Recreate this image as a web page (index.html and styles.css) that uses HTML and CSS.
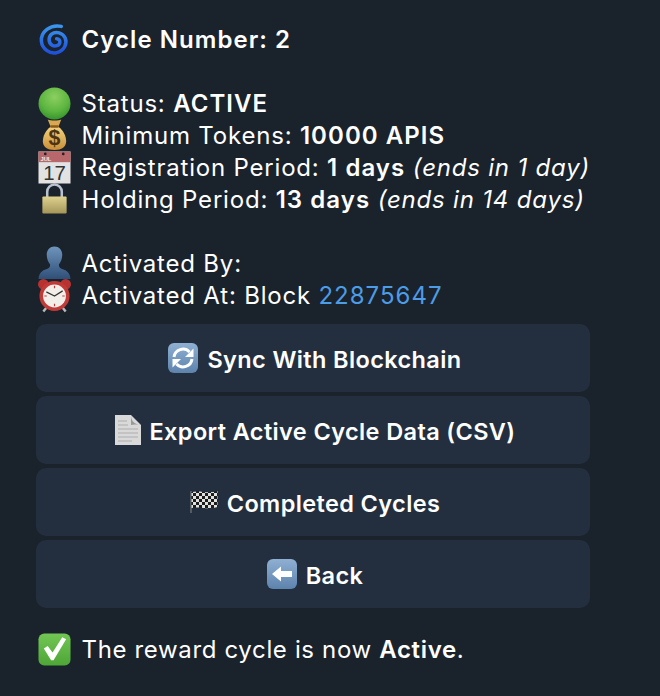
FILE: index.html
```html
<!DOCTYPE html>
<html lang="en">
<head>
<meta charset="utf-8">
<title>Cycle</title>
<link rel="stylesheet" href="styles.css">
</head>
<body>
<svg class="defs" width="0" height="0" aria-hidden="true">
  <defs>
    <linearGradient id="gBlue" x1="0" y1="0" x2="0" y2="1"><stop offset="0" stop-color="#3a96ee"/><stop offset="1" stop-color="#1f50dc"/></linearGradient>
    <radialGradient id="gBall" cx=".5" cy=".3" r=".75"><stop offset="0" stop-color="#8ccf62"/><stop offset=".6" stop-color="#5cb53f"/><stop offset="1" stop-color="#2f8f2a"/></radialGradient>
    <linearGradient id="gBag" x1="0" y1="0" x2="0" y2="1"><stop offset="0" stop-color="#f3d27f"/><stop offset="1" stop-color="#c98f36"/></linearGradient>
    <linearGradient id="gLock" x1="0" y1="0" x2="0" y2="1"><stop offset="0" stop-color="#dfd28f"/><stop offset="1" stop-color="#a39558"/></linearGradient>
    <linearGradient id="gUser" x1="0" y1="0" x2="0" y2="1"><stop offset="0" stop-color="#6f95bd"/><stop offset="1" stop-color="#2f4f77"/></linearGradient>
    <linearGradient id="gKey" x1="0" y1="0" x2="0" y2="1"><stop offset="0" stop-color="#8fb0d2"/><stop offset="1" stop-color="#5d83ad"/></linearGradient>
    <linearGradient id="gCheck" x1="0" y1="0" x2="0" y2="1"><stop offset="0" stop-color="#72c653"/><stop offset="1" stop-color="#4ea638"/></linearGradient>
    <pattern id="pCheck" width="6" height="6" patternUnits="userSpaceOnUse"><rect width="6" height="6" fill="#e0e0e0"/><rect width="3" height="3" fill="#1c1c1c"/><rect x="3" y="3" width="3" height="3" fill="#1c1c1c"/></pattern>
  </defs>
</svg>
<main class="panel">
  <section class="lines">
    <p class="row strong"><svg class="ico" viewBox="0 0 34 34"><path d="M24 3.500C13 1 2.500 9 3.500 19c.8 8 9 13.500 16 11.500 7.500-2 11-9 8.500-15-2.500-5.500-9.500-7.500-14-4-3.500 3-3.500 9 .5 11.500 3 1.800 7.500.3 8-3 .3-2.300-1.300-3.800-3.300-3.800" fill="none" stroke="url(#gBlue)" stroke-width="3.600" stroke-linecap="round"/></svg><span>Cycle Number: 2</span></p>
    <p class="row blank"></p>
    <p class="row"><svg class="ico" viewBox="0 0 34 34"><circle cx="17" cy="17" r="16.500" fill="url(#gBall)"/></svg><span>Status: <b>ACTIVE</b></span></p>
    <p class="row"><svg class="ico" viewBox="0 0 34 34"><path d="M10 .5c3 1.500 11 1.500 14 0l-3 7.500h-8z" fill="#d9a94f"/><path d="M13 8C7.500 12 5 18 5 23c0 6 4.500 9 12 9s12-3 12-9c0-5-2.500-11-8-15z" fill="url(#gBag)"/><rect x="12.500" y="6.500" width="9" height="2.500" rx="1" fill="#8a5a1c"/><text class="dollar" x="17" y="27" text-anchor="middle">$</text></svg><span>Minimum Tokens: <b>10000 APIS</b></span></p>
    <p class="row"><svg class="ico" viewBox="0 0 34 34"><rect x=".5" y=".5" width="33" height="33" fill="#e2e2e2"/><rect x=".5" y=".5" width="33" height="11" fill="#b8676a"/><circle cx="7.500" cy="3" r="1.400" fill="#222"/><circle cx="26" cy="3" r="1.400" fill="#222"/><text class="jul" x="2.500" y="10">JUL</text><text class="day" x="17" y="30" text-anchor="middle">17</text></svg><span>Registration Period: <b>1 days</b> <i>(ends in 1 day)</i></span></p>
    <p class="row"><svg class="ico" viewBox="0 0 34 34"><path d="M9.500 16V9a7.500 7.500 0 0 1 15 0v7" fill="none" stroke="#b9c2cf" stroke-width="2.600"/><rect x="4.500" y="14" width="25" height="17.500" rx="1" fill="url(#gLock)"/></svg><span>Holding Period: <b>13 days</b> <i>(ends in 14 days)</i></span></p>
    <p class="row blank"></p>
    <p class="row"><svg class="ico" viewBox="0 0 34 34"><path d="M17-.5c4.500 0 8 3.500 8 8.500 0 4-1.500 7.500-3.500 10 0 2.500 1 4 4 5 4 1.200 7.500 3.500 8 10H.5c.5-6.500 4-8.800 8-10 3-1 4-2.500 4-5-2-2.500-3.500-6-3.500-10C9 3 12.500-.5 17-.5z" fill="url(#gUser)"/></svg><span>Activated By:</span></p>
    <p class="row"><svg class="ico" viewBox="0 0 34 34"><circle cx="5.500" cy="5.500" r="5.500" fill="#b8322f"/><circle cx="28.500" cy="5.500" r="5.500" fill="#b8322f"/><path d="M9 29l-3.500 4.500M25 29l3.500 4.500" stroke="#b9b9b9" stroke-width="2.500"/><circle cx="17" cy="17.500" r="15.500" fill="#c23a37"/><circle cx="17" cy="17.500" r="11.800" fill="#f2eeea"/><path d="M17 17.500l-8-4M17 17.500l8-5" stroke="#333" stroke-width="1.300" stroke-linecap="round"/><path d="M17 7v2.500M17 25.500v2.500M6.500 17.500h2.500M25 17.500h2.500" stroke="#c23a37" stroke-width="1.200"/></svg><span>Activated At: Block <a class="link" href="#">22875647</a></span></p>
  </section>
  <nav class="buttons">
    <a class="btn" href="#"><svg class="btn-ico" viewBox="0 0 30 30"><rect width="30" height="30" rx="6" fill="url(#gKey)"/><path d="M6 14a9 9 0 0 1 15.500-5M24 16a9 9 0 0 1-15.500 5" fill="none" stroke="#fff" stroke-width="3"/><path d="M25.500 5.500v8.500h-8.500zM4.500 24.500v-8.500h8.500z" fill="#fff"/></svg><span>Sync With Blockchain</span></a>
    <a class="btn" href="#"><svg class="btn-ico doc" viewBox="0 0 26 30"><path d="M0 0h16l10 10v20H0z" fill="#d9d9d9"/><path d="M16 0c0 5 2 9 10 10-4-1-10 0-10 0z" fill="#999"/><path d="M3 6h9M3 10h10M3 14h20M3 18h20M3 22h20M3 26h14" stroke="#bcbcbc" stroke-width="1.300"/></svg><span>Export Active Cycle Data (CSV)</span></a>
    <a class="btn" href="#"><svg class="btn-ico flag" viewBox="0 0 28 24"><path d="M1 1v22" stroke="#888" stroke-width="1"/><path d="M1.500 2C10 0 18 4 27.500 1v16c-9 3-18-1-26 1z" fill="url(#pCheck)"/></svg><span>Completed Cycles</span></a>
    <a class="btn" href="#"><svg class="btn-ico" viewBox="0 0 30 30"><rect width="30" height="30" rx="6" fill="url(#gKey)"/><path d="M5 15l9-7.500v4.500h11v6H14v4.500z" fill="#fff"/></svg><span>Back</span></a>
  </nav>
  <p class="row note"><svg class="ico" viewBox="0 0 34 34"><rect x=".5" y=".5" width="33" height="33" rx="6" fill="url(#gCheck)"/><path d="M6 16l4-2.500 5 6.500L25 4.500l4 2L16 28h-2.500z" fill="#fff"/></svg><span>The reward cycle is now <b>Active</b>.</span></p>
</main>
</body>
</html>
```
FILE: styles.css
```css
html, body { margin: 0; padding: 0; }
body {
  width: 660px;
  height: 696px;
  overflow: hidden;
  background: #1a222c;
  color: #fff;
  font-family: "Inter", "Liberation Sans", sans-serif;
  font-size: 24px;
  letter-spacing: 0.8px;
}
.defs { position: absolute; }
.panel { padding: 23px 70px 0 38px; }
.lines { display: flex; flex-direction: column; }
.row {
  display: flex;
  align-items: center;
  gap: 10.5px;
  height: 32px;
  margin: 0;
  white-space: pre;
}
.row b, .strong { font-weight: 600; letter-spacing: 1.05px; }
.row i { font-style: italic; }
.ico {
  width: 33px;
  height: 33px;
  flex: none;
  overflow: visible;
}
.dollar { font: 700 22px "Liberation Sans", sans-serif; fill: #4a3413; letter-spacing: 0; }
.jul { font: 700 6px "Liberation Sans", sans-serif; fill: #eed; letter-spacing: 0; }
.day { font: 400 21px "Liberation Sans", sans-serif; fill: #333; letter-spacing: 0; }
.link { color: #4c9ce6; text-decoration: none; letter-spacing: 1px; }
.buttons {
  display: flex;
  flex-direction: column;
  gap: 4px;
  margin: 13px 0 0 -2px;
}
.btn {
  display: flex;
  align-items: center;
  justify-content: center;
  gap: 9px;
  height: 68px;
  padding-left: 4px;
  background: #232f3f;
  border-radius: 10px;
  color: #fff;
  text-decoration: none;
  font-weight: 600;
  font-size: 23.5px;
  letter-spacing: 0.38px;
}
.btn span { padding-top: 2px; }
.btn-ico { width: 30px; height: 30px; flex: none; }
.doc { width: 26px; }
.flag { width: 28px; height: 24px; }
.note { margin-top: 25px; letter-spacing: 0.65px; }
.note b { letter-spacing: 0.65px; }
```
